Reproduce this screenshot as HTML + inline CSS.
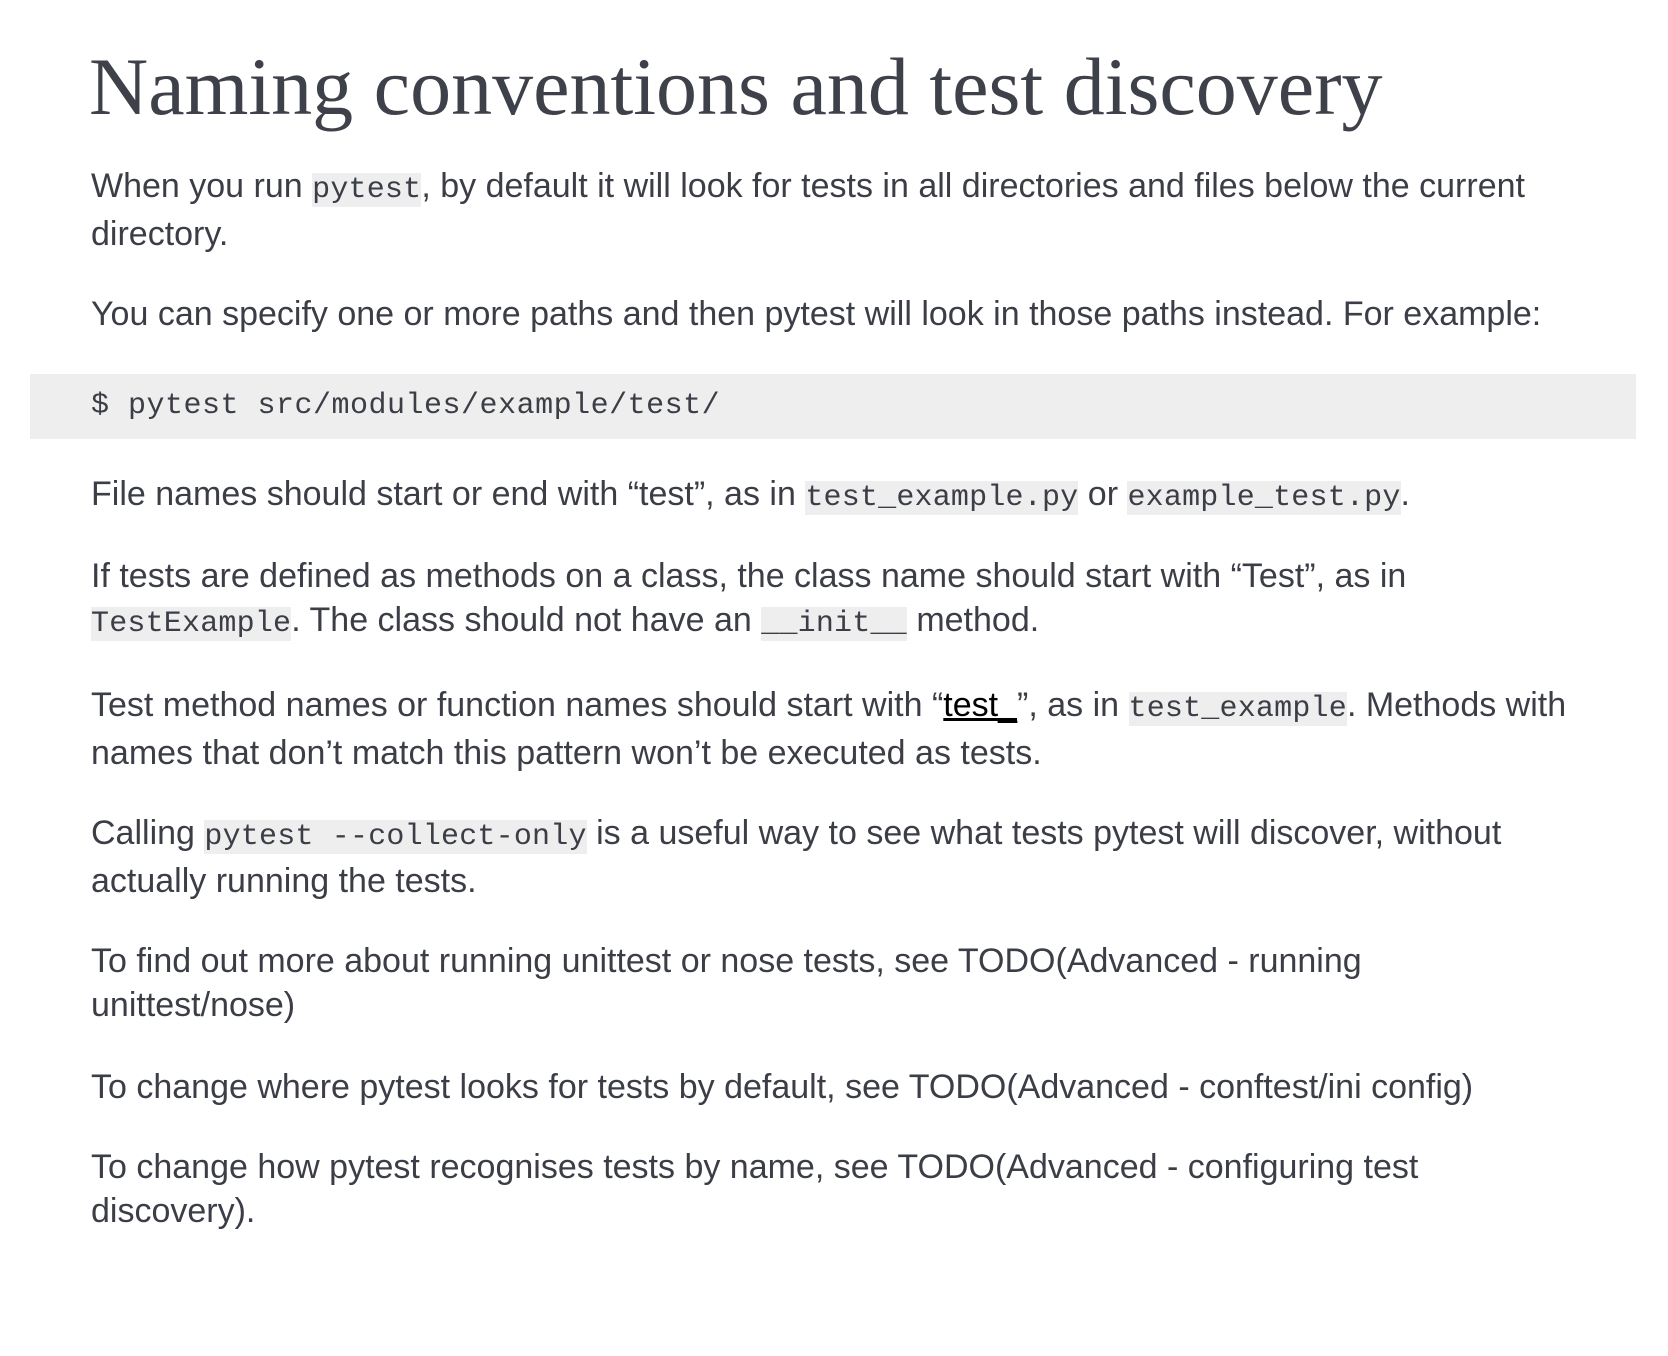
<!DOCTYPE html>
<html><head><meta charset="utf-8"><style>
html,body{margin:0;padding:0;background:#fff;width:1668px;height:1356px;overflow:hidden}
body{position:relative;font-family:"Liberation Sans",Arial,sans-serif;color:#3b3e46}
h1{position:absolute;left:89px;top:46px;margin:0;font-family:"Liberation Serif","Times New Roman",serif;font-weight:normal;font-size:82px;line-height:82px;color:#3e4149;white-space:nowrap}
p{position:absolute;left:91px;margin:0;font-size:34px;line-height:44px;white-space:nowrap}
code{font-family:"Liberation Mono","DejaVu Sans Mono",monospace;font-size:30px;background:#eeeeee;letter-spacing:0.2px}
.pre{position:absolute;left:30px;top:374px;width:1606px;height:65px;background:#eeeeee}
.pre span{position:absolute;left:61px;top:14px;font-family:"Liberation Mono","DejaVu Sans Mono",monospace;font-size:30px;line-height:36px;letter-spacing:0.5px;color:#3b3e46;white-space:pre}
a{color:#000;text-decoration:underline}
</style></head><body>
<h1>Naming conventions and test discovery</h1>
<p style="top:164px">When you run <code>pytest</code>, by default it will look for tests in all directories and files below the current<br>directory.</p>
<p style="top:292px">You can specify one or more paths and then pytest will look in those paths instead. For example:</p>
<div class="pre"><span>$ pytest src/modules/example/test/</span></div>
<p style="top:472px">File names should start or end with “test”, as in <code>test_example.py</code> or <code>example_test.py</code>.</p>
<p style="top:554px">If tests are defined as methods on a class, the class name should start with “Test”, as in<br><code>TestExample</code>. The class should not have an <code>__init__</code> method.</p>
<p style="top:683px">Test method names or function names should start with “<a>test_</a>”, as in <code>test_example</code>. Methods with<br>names that don’t match this pattern won’t be executed as tests.</p>
<p style="top:811px">Calling <code>pytest --collect-only</code> is a useful way to see what tests pytest will discover, without<br>actually running the tests.</p>
<p style="top:939px">To find out more about running unittest or nose tests, see TODO(Advanced - running<br>unittest/nose)</p>
<p style="top:1065px">To change where pytest looks for tests by default, see TODO(Advanced - conftest/ini config)</p>
<p style="top:1145px">To change how pytest recognises tests by name, see TODO(Advanced - configuring test<br>discovery).</p>
</body></html>
